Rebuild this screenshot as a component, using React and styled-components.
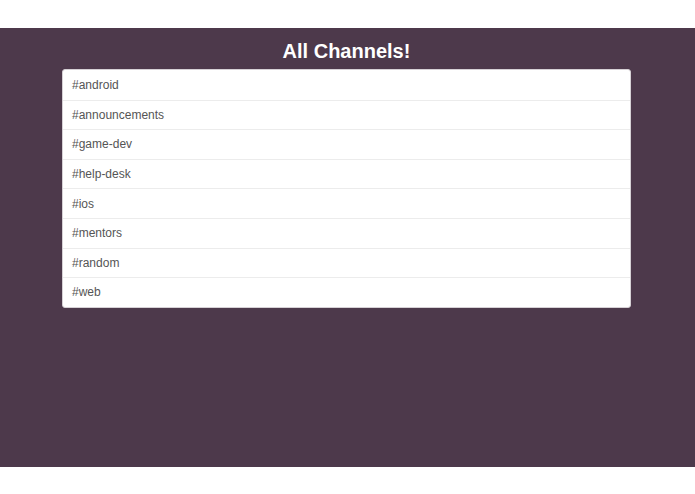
import React from "react";
import styled, { createGlobalStyle } from "styled-components";

const GlobalStyle = createGlobalStyle`
  html, body {
    margin: 0;
    padding: 0;
    background: #ffffff;
    font-family: "Helvetica Neue", "Liberation Sans", Arial, sans-serif;
  }
`;

const Page = styled.div`
  padding-top: 28px;
  width: 695px;
  height: 494px;
  box-sizing: border-box;
`;

const Section = styled.main`
  background: #4d394b;
  height: 439px;
  display: flex;
  flex-direction: column;
  padding: 11px 0 0 62px;
  box-sizing: border-box;
`;

const Title = styled.h1`
  margin: 0 0 6px;
  width: 569px;
  text-align: center;
  color: #ffffff;
  font-size: 20px;
  line-height: 24px;
  font-weight: 700;
`;

const List = styled.ul`
  list-style: none;
  margin: 0;
  padding: 0;
  width: 569px;
  background: #ffffff;
  border: 1px solid #d6d1d5;
  border-radius: 3px;
  box-sizing: border-box;
  overflow: hidden;
`;

const Item = styled.li`
  height: 29.6px;
  box-sizing: border-box;
  display: flex;
  align-items: center;
  padding: 0 9px;
  font-size: 12px;
  color: #555555;
  border-top: ${(p) => (p.$first ? "none" : "1px solid #ececec")};
`;

const channels = [
  "android",
  "announcements",
  "game-dev",
  "help-desk",
  "ios",
  "mentors",
  "random",
  "web",
];

export default function App() {
  return (
    <>
      <GlobalStyle />
      <Page>
        <Section>
          <Title>All Channels!</Title>
          <List>
            {channels.map((c, i) => (
              <Item key={c} $first={i === 0}>
                #{c}
              </Item>
            ))}
          </List>
        </Section>
      </Page>
    </>
  );
}
